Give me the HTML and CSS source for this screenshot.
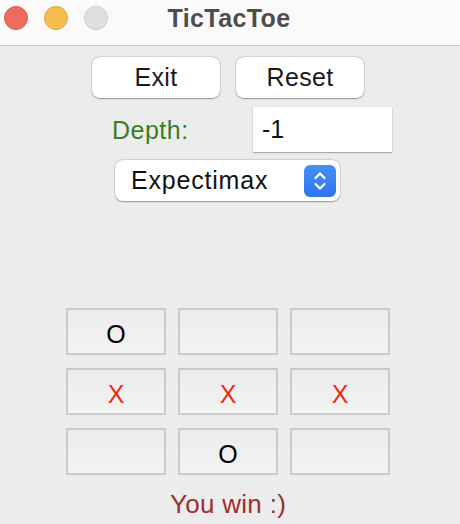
FILE: index.html
```html
<!DOCTYPE html>
<html>
<head>
<meta charset="utf-8">
<link rel="stylesheet" href="styles.css">
</head>
<body>
<div class="window">
  <header class="titlebar">
    <div class="lights">
      <span class="light red"></span>
      <span class="light yellow"></span>
      <span class="light gray"></span>
    </div>
    <div class="title">TicTacToe</div>
  </header>
  <main class="content">
    <div class="btn-row">
      <button class="btn">Exit</button>
      <button class="btn">Reset</button>
    </div>
    <div class="depth-row">
      <span class="depth-label">Depth:</span>
      <div class="field">-1</div>
    </div>
    <div class="select">
      <span class="select-text">Expectimax</span>
      <span class="select-arrows">
        <svg width="32" height="32" viewBox="0 0 32 32">
          <path d="M11.5 13 L16 8.5 L20.5 13" fill="none" stroke="#fff" stroke-width="2.2" stroke-linecap="round" stroke-linejoin="round"/>
          <path d="M11.5 19 L16 23.5 L20.5 19" fill="none" stroke="#fff" stroke-width="2.2" stroke-linecap="round" stroke-linejoin="round"/>
        </svg>
      </span>
    </div>
    <div class="board">
      <div class="cell o">O</div>
      <div class="cell"></div>
      <div class="cell"></div>
      <div class="cell x">X</div>
      <div class="cell x">X</div>
      <div class="cell x">X</div>
      <div class="cell"></div>
      <div class="cell o">O</div>
      <div class="cell"></div>
    </div>
    <div class="message">You win :)</div>
  </main>
</div>
</body>
</html>
```
FILE: styles.css
```css
html, body {
  margin: 0;
  padding: 0;
}
body {
  width: 460px;
  height: 524px;
  background: #ececec;
  font-family: "Liberation Sans", Arial, sans-serif;
  overflow: hidden;
}
.window {
  display: flex;
  flex-direction: column;
}
.titlebar {
  position: relative;
  height: 45px;
  background: #fafafa;
  border-bottom: 1px solid #cdcdcd;
  display: flex;
  align-items: center;
  justify-content: center;
}
.lights {
  position: absolute;
  left: 4px;
  top: 6px;
  display: flex;
  gap: 16px;
}
.light {
  width: 22px;
  height: 22px;
  border-radius: 50%;
  border: 1px solid transparent;
}
.light.red { background: #ee6b60; border-color: #d65b50; }
.light.yellow { background: #f6be4f; border-color: #dea33d; }
.light.gray { background: #e0e0e0; border-color: #c9c9c9; }
.title {
  font-size: 25px;
  font-weight: bold;
  color: #4d4d4d;
  margin-left: -2px;
  margin-top: -8px;
  letter-spacing: 0.4px;
}
.content {
  display: flex;
  flex-direction: column;
  padding-top: 11px;
}
.btn-row {
  display: flex;
  gap: 16px;
  margin-left: 92px;
}
.btn {
  width: 128px;
  height: 41px;
  border: none;
  border-radius: 8px;
  background: #fff;
  box-shadow: 0 0.5px 1.5px rgba(0,0,0,0.35), 0 0 0 0.5px rgba(0,0,0,0.08);
  font-family: "Liberation Sans", Arial, sans-serif;
  font-size: 25px;
  color: #1a1a1a;
  padding: 0;
  letter-spacing: 0.3px;
}
.depth-row {
  display: flex;
  align-items: center;
  margin-top: 9px;
  margin-left: 112px;
}
.depth-label {
  width: 141px;
  font-size: 25px;
  color: #3a7e24;
  letter-spacing: 0.5px;
  padding-top: 2px;
}
.field {
  width: 130px;
  height: 45px;
  padding-left: 9px;
  background: #fff;
  box-shadow: 0 1px 1px rgba(0,0,0,0.25), 0 0 0 0.5px rgba(0,0,0,0.06);
  font-size: 25px;
  line-height: 45px;
  color: #111;
}
.select {
  display: flex;
  align-items: center;
  justify-content: space-between;
  width: 225px;
  height: 41px;
  margin-top: 8px;
  margin-left: 115px;
  box-sizing: border-box;
  padding: 0 4px 0 16px;
  background: #fff;
  border-radius: 8px;
  box-shadow: 0 0.5px 1.5px rgba(0,0,0,0.35), 0 0 0 0.5px rgba(0,0,0,0.08);
}
.select-text {
  font-size: 25px;
  color: #111;
  letter-spacing: 0.8px;
}
.select-arrows {
  display: block;
  width: 32px;
  height: 32px;
  border-radius: 6px;
  background: linear-gradient(#4691f6, #2d74ec);
}
.select-arrows svg { display: block; }
.board {
  display: grid;
  grid-template-columns: repeat(3, 100px);
  grid-auto-rows: 47px;
  column-gap: 12px;
  row-gap: 13px;
  margin-top: 107px;
  margin-left: 66px;
}
.cell {
  box-sizing: border-box;
  border: 2px solid #cbcbcb;
  background: linear-gradient(#ececec, #f3f3f3);
  display: flex;
  align-items: center;
  justify-content: center;
  font-size: 25px;
  padding-top: 6px;
}
.cell.o { color: #000; }
.cell.x { color: #ee2a1c; }
.message {
  margin-top: 14px;
  line-height: 30px;
  text-align: center;
  padding-right: 4px;
  font-size: 26px;
  color: #9b2f2d;
  letter-spacing: 0.3px;
}
```
